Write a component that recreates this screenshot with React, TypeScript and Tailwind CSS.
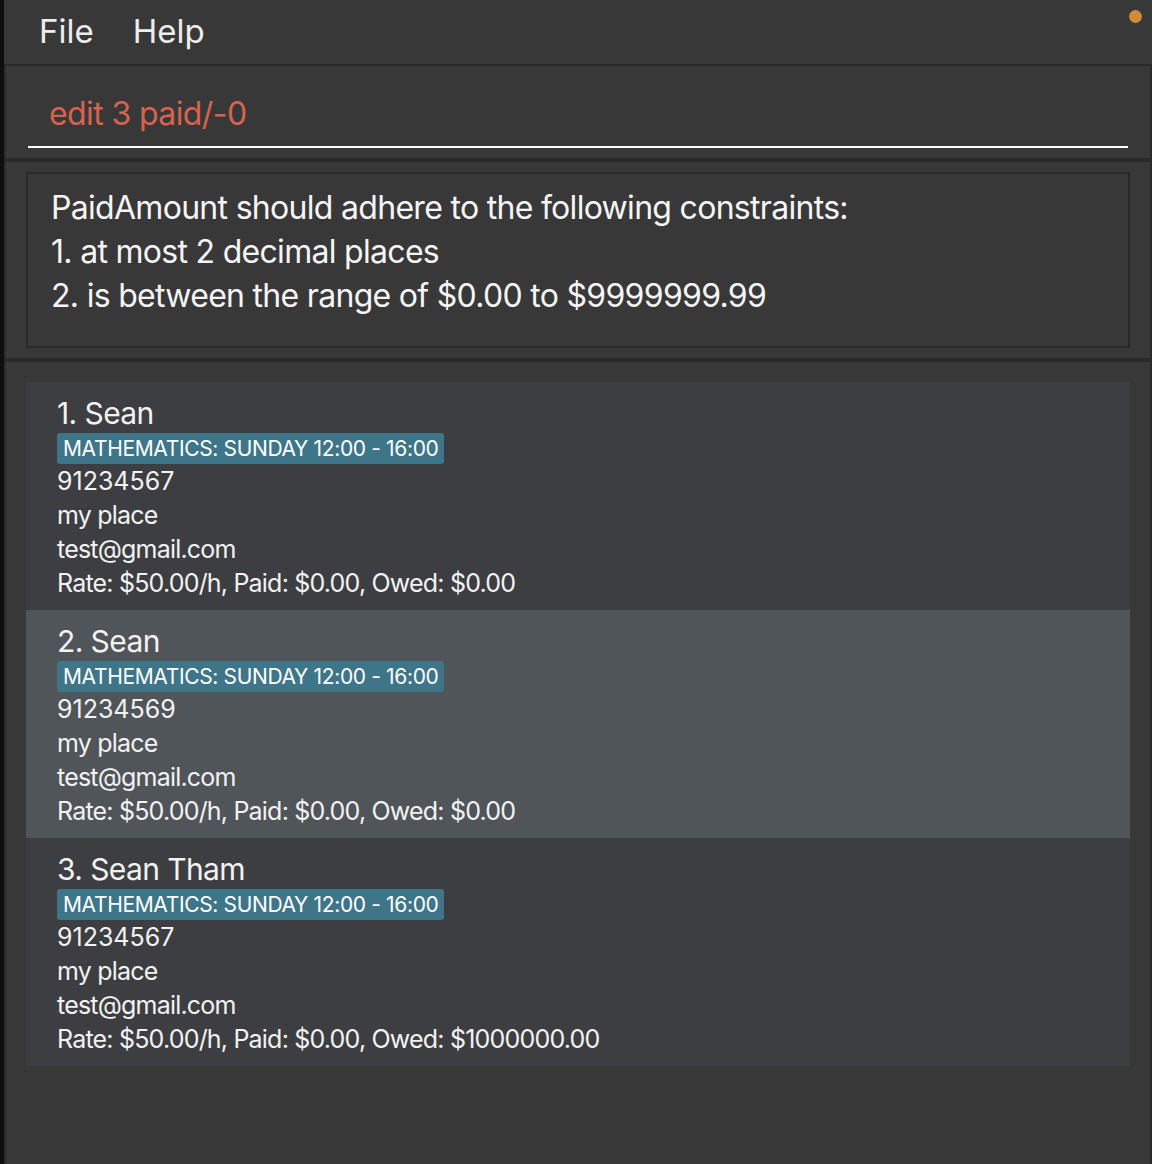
const font = { fontFamily: 'Inter, "Open Sans", sans-serif' }

type Person = {
  name: string
  tag: string
  phone: string
  address: string
  email: string
  owed: string
}

const people: Person[] = [
  { name: '1. Sean', tag: 'MATHEMATICS: SUNDAY 12:00 - 16:00', phone: '91234567', address: 'my place', email: 'test@gmail.com', owed: '$0.00' },
  { name: '2. Sean', tag: 'MATHEMATICS: SUNDAY 12:00 - 16:00', phone: '91234569', address: 'my place', email: 'test@gmail.com', owed: '$0.00' },
  { name: '3. Sean Tham', tag: 'MATHEMATICS: SUNDAY 12:00 - 16:00', phone: '91234567', address: 'my place', email: 'test@gmail.com', owed: '$1000000.00' },
]

function PersonCard({ p, selected }: { p: Person; selected: boolean }) {
  return (
    <div className={`h-[228px] pl-[31px] pt-[12px] text-[#f2f2f2] ${selected ? 'bg-[#4f5558]' : 'bg-[#3c3e41]'}`}>
      <div className="text-[30px] leading-[38px] tracking-[-0.6px]">{p.name}</div>
      <div className="mt-[1px] inline-block rounded-[3px] bg-[#3e7589] px-[6px] text-[21px] leading-[31px] tracking-[-0.35px] text-white">
        {p.tag}
      </div>
      <div className="text-[25px] leading-[34px] tracking-[-0.8px]">
        <div className="tracking-normal">{p.phone}</div>
        <div>{p.address}</div>
        <div>{p.email}</div>
        <div>Rate: $50.00/h, Paid: $0.00, Owed: {p.owed}</div>
      </div>
    </div>
  )
}

export default function App() {
  return (
    <div className="flex h-[1164px] w-[1152px] overflow-hidden bg-[#0e0e0e]" style={font}>
      <div className="ml-[4px] flex flex-1 flex-col bg-[#2a2a2a]">
        {/* menu bar */}
        <div className="relative flex h-[64px] items-center gap-[39px] bg-[#383838] pl-[35px] text-[33px] text-[#ededed]">
          <span>File</span>
          <span>Help</span>
          <span className="absolute right-[10px] top-[10px] h-[13px] w-[13px] rounded-full bg-[#d08a38]" />
        </div>

        {/* command box */}
        <div className="mt-[2px] ml-[2px] mr-[2px] h-[92px] bg-[#383838] px-[22px] pt-[27px]">
          <div className="border-b-[2px] border-white pb-[11px] pl-[21px] text-[32px] leading-[42px] tracking-[-0.6px] text-[#d9624d]">
            edit 3 paid/-0
          </div>
        </div>

        {/* result display */}
        <div className="mt-[4px] ml-[2px] mr-[2px] h-[196px] bg-[#383838] px-[20px] pt-[10px]">
          <div className="h-[176px] border-[2px] border-[#2a2a2a] pl-[23px] pt-[12px] text-[32px] leading-[44px] tracking-[-0.7px] text-[#f5f5f5]">
            <div>PaidAmount should adhere to the following constraints:</div>
            <div>1. at most 2 decimal places</div>
            <div>2. is between the range of $0.00 to $9999999.99</div>
          </div>
        </div>

        {/* list */}
        <div className="mt-[4px] ml-[2px] mr-[2px] flex-1 bg-[#383838] px-[20px] pt-[20px]">
          {people.map((p, i) => (
            <PersonCard key={i} p={p} selected={i === 1} />
          ))}
        </div>
      </div>
    </div>
  )
}
